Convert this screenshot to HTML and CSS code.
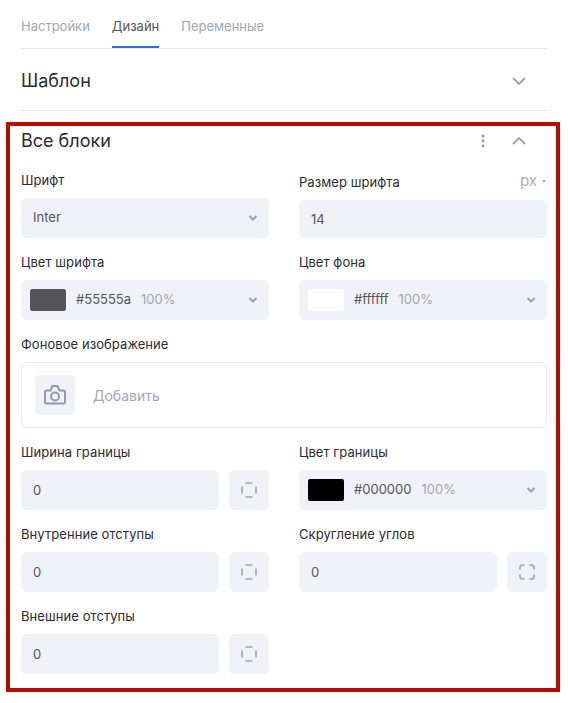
FILE: index.html
```html
<!DOCTYPE html>
<html lang="ru">
<head>
    <meta charset="UTF-8">
    <meta name="viewport" content="width=device-width, initial-scale=1.0">
    <title>Дизайн</title>
    <link rel="stylesheet" href="styles.css">
</head>
<body>
    <svg class="icon-defs" width="0" height="0">
        <symbol id="chevron-small" viewBox="0 0 10 6"><path d="M1.500 1l3.500 3.500L8.500 1" fill="none" stroke="currentColor" stroke-width="2"/></symbol>
        <symbol id="chevron-big" viewBox="0 0 14 8"><path d="M1 1l6 6 6-6" fill="none" stroke="currentColor" stroke-width="1.800"/></symbol>
        <symbol id="sides" viewBox="0 0 16 16"><path d="M4.500 1h7M4.500 15h7M1 4.500v7M15 4.500v7" fill="none" stroke="currentColor" stroke-width="1.600"/></symbol>
        <symbol id="corners" viewBox="0 0 16 16"><path d="M1 5.500V3.500A2.500 2.500 0 0 1 3.500 1H5.500M10.500 1h2A2.500 2.500 0 0 1 15 3.500v2M15 10.500v2a2.500 2.500 0 0 1-2.500 2.500h-2M5.500 15h-2A2.500 2.500 0 0 1 1 12.500v-2" fill="none" stroke="currentColor" stroke-width="1.700"/></symbol>
    </svg>

    <div class="panel">
        <div class="tabs">
            <a class="tab">Настройки</a>
            <a class="tab active">Дизайн</a>
            <a class="tab">Переменные</a>
        </div>

        <div class="section-row">
            <h2>Шаблон</h2>
            <svg class="chevron-big"><use href="#chevron-big"/></svg>
        </div>

        <div class="blocks-head">
            <h2>Все блоки</h2>
            <svg class="kebab" viewBox="0 0 4 14"><circle cx="2" cy="2" r="1.400"/><circle cx="2" cy="7" r="1.400"/><circle cx="2" cy="12" r="1.400"/></svg>
            <svg class="chevron-big up"><use href="#chevron-big"/></svg>
        </div>

        <div class="form-grid">
            <div class="field">
                <label>Шрифт</label>
                <div class="control select">
                    <span class="value">Inter</span>
                    <svg class="chevron-small"><use href="#chevron-small"/></svg>
                </div>
            </div>
            <div class="field field-size">
                <div class="label-row">
                    <label>Размер шрифта</label>
                    <span class="unit">px<i class="caret"></i></span>
                </div>
                <div class="control short"><span class="value">14</span></div>
            </div>

            <div class="field">
                <label>Цвет шрифта</label>
                <div class="control select color">
                    <span class="swatch dark"></span>
                    <span class="value">#55555a</span>
                    <span class="alpha">100%</span>
                    <svg class="chevron-small"><use href="#chevron-small"/></svg>
                </div>
            </div>
            <div class="field">
                <label>Цвет фона</label>
                <div class="control select color">
                    <span class="swatch white"></span>
                    <span class="value">#ffffff</span>
                    <span class="alpha">100%</span>
                    <svg class="chevron-small"><use href="#chevron-small"/></svg>
                </div>
            </div>

            <div class="field wide">
                <label>Фоновое изображение</label>
                <div class="upload">
                    <span class="upload-icon">
                        <svg viewBox="0 0 24 24" width="24" height="24" fill="none" stroke="currentColor" stroke-width="2" stroke-linejoin="round">
                            <path d="M3.500 7.500h4l2-4.500h5l2 4.500h4a1.500 1.500 0 0 1 1.500 1.500v10a1.500 1.500 0 0 1-1.500 1.500h-17A1.500 1.500 0 0 1 2 19V9a1.500 1.500 0 0 1 1.500-1.500z"/>
                            <circle cx="12" cy="13.500" r="4"/>
                        </svg>
                    </span>
                    <span class="upload-text">Добавить</span>
                </div>
            </div>

            <div class="field">
                <label>Ширина границы</label>
                <div class="with-button">
                    <div class="control"><span class="value">0</span></div>
                    <button class="square"><svg><use href="#sides"/></svg></button>
                </div>
            </div>
            <div class="field">
                <label>Цвет границы</label>
                <div class="control select color">
                    <span class="swatch black"></span>
                    <span class="value">#000000</span>
                    <span class="alpha">100%</span>
                    <svg class="chevron-small"><use href="#chevron-small"/></svg>
                </div>
            </div>

            <div class="field">
                <label>Внутренние отступы</label>
                <div class="with-button">
                    <div class="control"><span class="value">0</span></div>
                    <button class="square"><svg><use href="#sides"/></svg></button>
                </div>
            </div>
            <div class="field">
                <label>Скругление углов</label>
                <div class="with-button">
                    <div class="control"><span class="value">0</span></div>
                    <button class="square"><svg><use href="#corners"/></svg></button>
                </div>
            </div>

            <div class="field">
                <label>Внешние отступы</label>
                <div class="with-button">
                    <div class="control"><span class="value">0</span></div>
                    <button class="square"><svg><use href="#sides"/></svg></button>
                </div>
            </div>
        </div>
    </div>

    <!-- Красная рамка поверх панели -->
    <div class="highlight"></div>
</body>
</html>
```

FILE: styles.css
```css
* {
    box-sizing: border-box;
}
body {
    margin: 0;
    background: #ffffff;
    font-family: Inter, "Noto Sans", sans-serif;
    color: #2b2b33;
    height: 703px;
    overflow: hidden;
}
.icon-defs {
    position: absolute;
}
.panel {
    padding: 0 21px;
}
/* Вкладки */
.tabs {
    display: flex;
    gap: 22px;
    height: 49px;
    border-bottom: 1px solid #e6e8f3;
}
.tab {
    height: 48px;
    padding-top: 17px;
    font-size: 13px;
    line-height: 18px;
    color: #a0a6b4;
}
.tab.active {
    color: #55555a;
    border-bottom: 2px solid #3b67e0;
}
/* Заголовки секций */
h2 {
    margin: 0;
    font-size: 18px;
    font-weight: 400;
    line-height: 24px;
    flex: 1;
}
.section-row {
    display: flex;
    align-items: center;
    height: 62px;
    border-bottom: 1px solid #e6e8f3;
    padding-top: 2px;
}
.chevron-big {
    width: 14px;
    height: 8px;
    margin-right: 21px;
    color: #9aa3b2;
}
.chevron-big.up {
    transform: rotate(180deg);
}
.blocks-head {
    display: flex;
    align-items: center;
    height: 36px;
    margin-top: 12px;
}
.kebab {
    width: 4px;
    height: 14px;
    fill: #8e95a5;
    margin-right: 27px;
}
/* Форма */
.form-grid {
    display: grid;
    grid-template-columns: 248px 248px;
    column-gap: 30px;
    row-gap: 15px;
    margin-top: 12px;
}
.field label {
    display: block;
    font-size: 13px;
    line-height: 18px;
    letter-spacing: 0.07px;
    margin-bottom: 9px;
}
.field.wide {
    grid-column: 1 / 3;
}
.field-size {
    padding-top: 2px;
}
.label-row {
    display: flex;
    justify-content: space-between;
    height: 18px;
    margin-bottom: 9px;
}
.unit {
    font-size: 15px;
    line-height: 18px;
    color: #a9afbc;
    display: flex;
    align-items: center;
    padding-right: 1px;
    padding-bottom: 2px;
}
.caret {
    width: 0;
    height: 0;
    margin-left: 5px;
    border-left: 2.500px solid transparent;
    border-right: 2.500px solid transparent;
    border-top: 3px solid #a9afbc;
}
.control {
    flex: 1;
    display: flex;
    align-items: center;
    height: 40px;
    padding: 0 12px;
    background: #f1f2f8;
    border-radius: 6px;
    font-size: 13px;
    color: #55555a;
}
.control.short {
    height: 38px;
}
.control.color {
    padding-left: 9px;
}
.value {
    flex: none;
}
.select .value,
.select .alpha {
    margin-bottom: 2px;
}
.swatch {
    width: 36px;
    height: 22px;
    border-radius: 2px;
    margin-right: 10px;
}
.swatch.dark {
    background: #55555a;
}
.swatch.white {
    background: #ffffff;
}
.swatch.black {
    background: #000000;
}
.alpha {
    margin-left: 10px;
    color: #a0a6b4;
}
.chevron-small {
    width: 10px;
    height: 6px;
    margin-left: auto;
    margin-right: -1px;
    color: #9aa3b2;
}
.upload {
    display: flex;
    align-items: center;
    height: 66px;
    padding-left: 13px;
    border: 1px solid #e6e8f3;
    border-radius: 6px;
}
.upload-icon {
    display: flex;
    align-items: center;
    justify-content: center;
    width: 40px;
    height: 40px;
    background: #f1f2f8;
    border-radius: 4px;
    color: #8b9bb0;
}
.upload-text {
    margin-left: 18px;
    font-size: 14px;
    color: #a0a9ba;
}
.with-button {
    display: flex;
    gap: 10px;
}
.square {
    width: 40px;
    height: 40px;
    padding: 0;
    border: 0;
    border-radius: 6px;
    background: #f1f2f8;
    color: #9aa1b9;
    display: flex;
    align-items: center;
    justify-content: center;
}
.square svg {
    width: 16px;
    height: 16px;
}
/* Красная рамка */
.highlight {
    position: absolute;
    left: 6px;
    top: 122px;
    width: 554px;
    height: 570px;
    border: 4px solid #b80b00;
    pointer-events: none;
}
```
